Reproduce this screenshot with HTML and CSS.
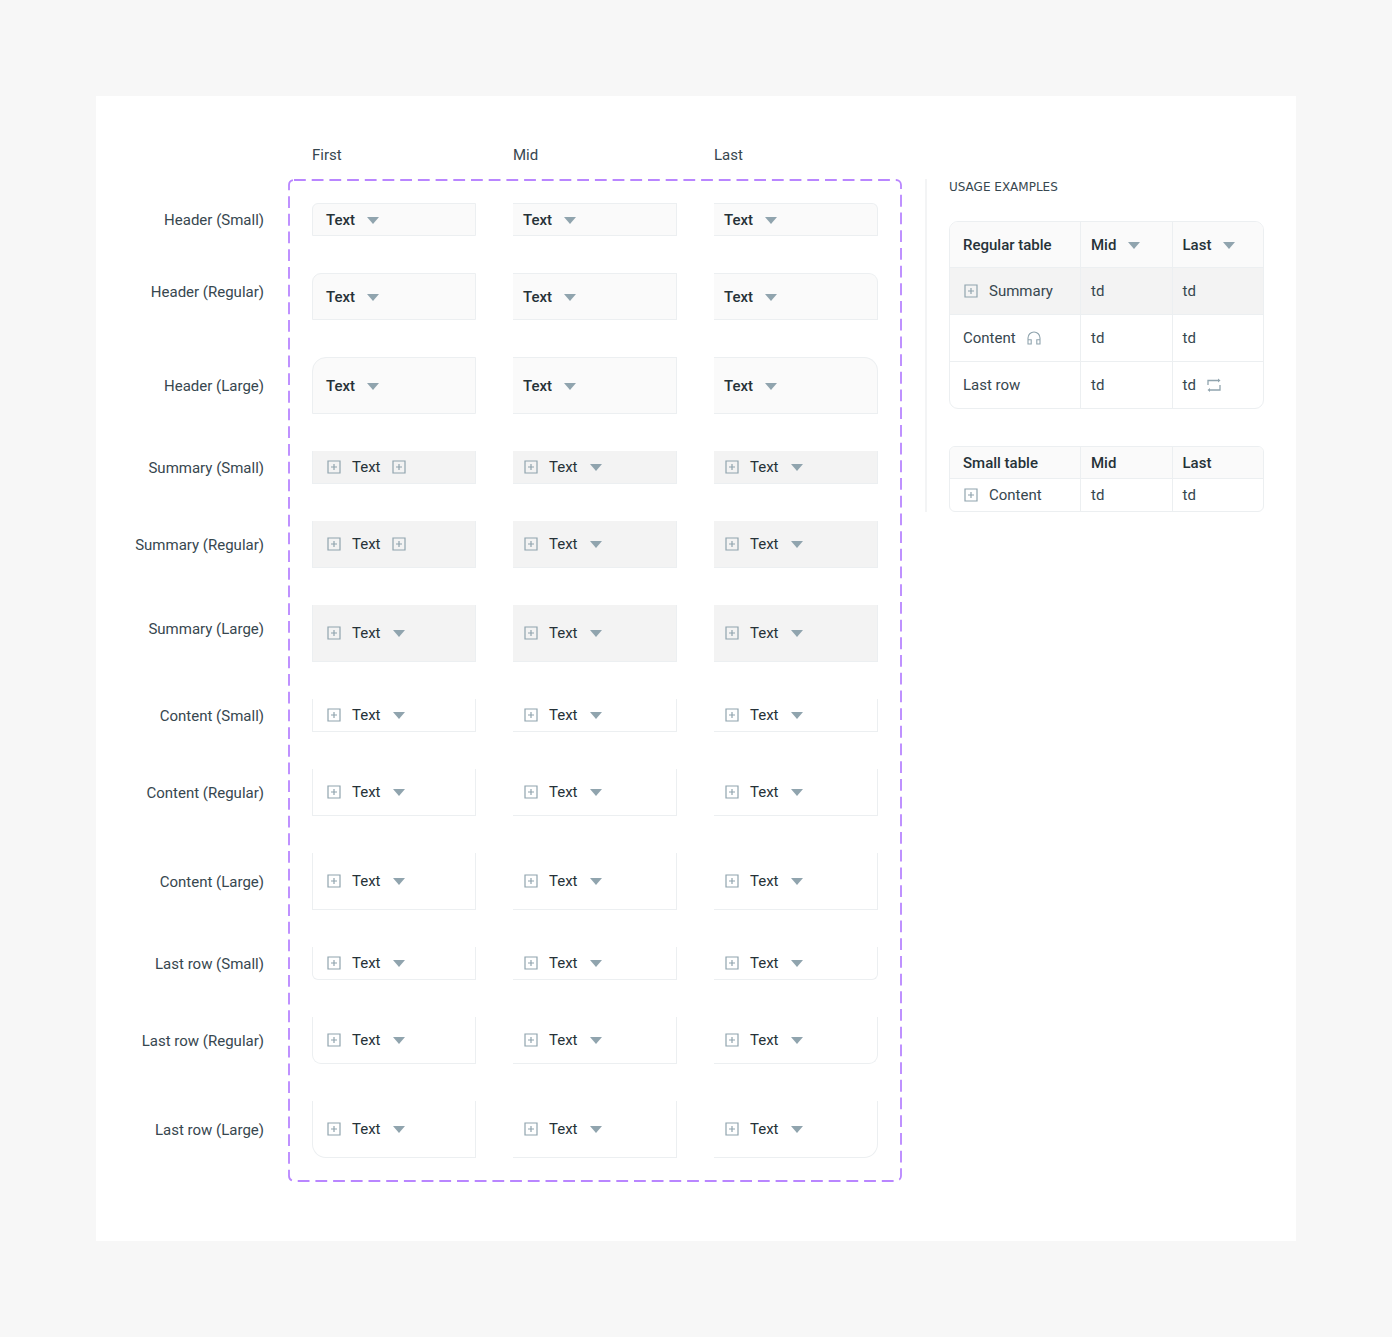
FILE: index.html
```html
<!DOCTYPE html>
<html lang="en">
  <head>
    <meta charset="UTF-8" />
    <title>Table cells</title>
    <link rel="stylesheet" href="styles.css">
  </head>

  <body>
    <svg width="0" height="0" class="sprite" aria-hidden="true">
      <symbol id="icon-sort" viewBox="0 0 16 16">
        <path d="M2 5h12l-6 7z" fill="currentColor" />
      </symbol>
      <symbol id="icon-plus" viewBox="0 0 16 16">
        <path d="M2 2h12v12H2zM8 5v6M5 8h6" fill="none" stroke="currentColor" stroke-width="1.2" />
      </symbol>
      <symbol id="icon-audio" viewBox="0 0 16 16">
        <path d="M2 13.5V8a6 6 0 0 1 12 0v5.5M2 9.8h3.2v4.2H2zM10.8 9.8H14v4.2h-3.2z" fill="none" stroke="currentColor" stroke-width="1.1" />
      </symbol>
      <symbol id="icon-repeat" viewBox="0 0 16 16">
        <path d="M2 8V3.5h11M14 8v5H3" fill="none" stroke="currentColor" stroke-width="1.3" />
        <path d="M12 1.5l2.5 2L12 5.5zM4 11l-2.5 2L4 15z" fill="currentColor" />
      </symbol>
    </svg>

    <main class="sheet">
      <div class="col-titles">
        <span>First</span>
        <span>Mid</span>
        <span>Last</span>
      </div>

      <div class="row-labels" id="row-labels"></div>

      <div class="frame">
        <svg class="frame-outline" aria-hidden="true">
          <rect x="1" y="1" rx="5" />
        </svg>
        <div class="variants" id="variants"></div>
      </div>

      <aside class="usage">
        <h2 class="usage-title">USAGE EXAMPLES</h2>

        <table class="table">
          <thead>
            <tr>
              <th class="col-first">Regular table</th>
              <th><div class="cell-content">Mid <button class="icon-btn" aria-label="Sort by Mid"><svg class="icon"><use href="#icon-sort" /></svg></button></div></th>
              <th><div class="cell-content">Last <button class="icon-btn" aria-label="Sort by Last"><svg class="icon"><use href="#icon-sort" /></svg></button></div></th>
            </tr>
          </thead>
          <tbody>
            <tr class="summary">
              <td><div class="cell-content"><button class="icon-btn" aria-label="Expand"><svg class="icon"><use href="#icon-plus" /></svg></button> Summary</div></td>
              <td>td</td>
              <td>td</td>
            </tr>
            <tr>
              <td><div class="cell-content">Content <svg class="icon"><use href="#icon-audio" /></svg></div></td>
              <td>td</td>
              <td>td</td>
            </tr>
            <tr>
              <td>Last row</td>
              <td>td</td>
              <td><div class="cell-content">td <svg class="icon"><use href="#icon-repeat" /></svg></div></td>
            </tr>
          </tbody>
        </table>

        <table class="table table-small">
          <thead>
            <tr>
              <th class="col-first">Small table</th>
              <th>Mid</th>
              <th>Last</th>
            </tr>
          </thead>
          <tbody>
            <tr>
              <td><div class="cell-content"><button class="icon-btn" aria-label="Expand"><svg class="icon"><use href="#icon-plus" /></svg></button> Content</div></td>
              <td>td</td>
              <td>td</td>
            </tr>
          </tbody>
        </table>
      </aside>
    </main>

    <script>
      const types = [
        { name: 'Header', type: 'header' },
        { name: 'Summary', type: 'summary' },
        { name: 'Content', type: 'content' },
        { name: 'Last row', type: 'last-row' },
      ];
      const sizes = ['Small', 'Regular', 'Large'];
      const positions = ['first', 'mid', 'last'];

      // Labels that sit a bit above the middle of their row
      const raised = ['Header (Regular)', 'Summary (Large)'];
      // First cells that end with a plus instead of the sort arrow
      const endsWithPlus = ['Summary (Small)', 'Summary (Regular)'];

      function iconButton(icon) {
        const label = icon === 'sort' ? 'Sort' : 'Expand';
        return `<button class="icon-btn" aria-label="${label}"><svg class="icon"><use href="#icon-${icon}" /></svg></button>`;
      }

      const labels = document.getElementById('row-labels');
      const variants = document.getElementById('variants');

      types.forEach(({ name, type }) => {
        sizes.forEach((size) => {
          const label = `${name} (${size})`;
          const sizeClass = `size-${size.toLowerCase()}`;
          const raisedClass = raised.includes(label) ? ' raised' : '';
          labels.innerHTML += `<div class="row-label ${sizeClass}${raisedClass}">${label}</div>`;

          const cells = positions.map((position) => {
            const before = type === 'header' ? '' : iconButton('plus');
            const plusEnd = position === 'first' && endsWithPlus.includes(label);
            const after = iconButton(plusEnd ? 'plus' : 'sort');
            return `<div class="cell ${type} ${position} ${sizeClass}">${before}<span>Text</span>${after}</div>`;
          });
          variants.innerHTML += cells.join('');
        });
      });
    </script>
  </body>
</html>
```
FILE: styles.css
```css
* {
  box-sizing: border-box;
}

body {
  margin: 0;
  padding: 96px;
  background: #f7f7f7;
  color: #37474f;
  font-family: Roboto, sans-serif;
  font-size: 15px;
  line-height: 24px;
}

.sprite {
  position: absolute;
}

.sheet {
  display: grid;
  grid-template-columns: 168px 1fr 362px;
  row-gap: 12px;
  padding: 47px 32px 59px 24px;
  background: #fff;
}

.col-titles {
  grid-column: 2;
  display: grid;
  grid-template-columns: repeat(3, 1fr);
  column-gap: 37px;
  padding: 0 24px;
}

.row-labels {
  grid-column: 1;
  display: flex;
  flex-direction: column;
  gap: 37px;
  padding: 24px 24px 0 0;
}

.row-label {
  display: flex;
  align-items: center;
  justify-content: flex-end;
  white-space: nowrap;
}

.row-label.raised {
  padding-bottom: 10px;
}

.size-small {
  --radius: 6px;
  height: 33px;
}

.size-regular {
  --radius: 9px;
  height: 47px;
}

.size-large {
  --radius: 14px;
  height: 57px;
}

.frame {
  position: relative;
  padding: 24px;
}

.frame-outline {
  position: absolute;
  top: 0;
  left: 0;
  width: 100%;
  height: 100%;
}

.frame-outline rect {
  width: calc(100% - 2px);
  height: calc(100% - 2px);
  fill: none;
  stroke: #b986ff;
  stroke-width: 1.8px;
  stroke-dasharray: 11.8 5.9;
}

.variants {
  position: relative;
  display: grid;
  grid-template-columns: repeat(3, 1fr);
  gap: 37px;
}

.cell,
.cell-content {
  display: flex;
  align-items: center;
  gap: 10px;
}

.cell {
  padding: 0 10px;
  border: 1px solid #eceff1;
  border-left: 0;
  border-top: 0;
  color: #263238;
}

.cell.first {
  padding-left: 13px;
  border-left: 1px solid #eceff1;
}

.cell.header {
  border-top: 1px solid #eceff1;
  background: #fafafa;
  font-weight: 500;
}

.cell.summary {
  background: #f3f3f3;
}

.header.first {
  border-top-left-radius: var(--radius);
}

.header.last {
  border-top-right-radius: var(--radius);
}

.last-row.first {
  border-bottom-left-radius: var(--radius);
}

.last-row.last {
  border-bottom-right-radius: var(--radius);
}

.icon-btn {
  display: flex;
  padding: 0;
  border: 0;
  background: none;
  color: inherit;
  cursor: pointer;
}

.icon {
  width: 16px;
  height: 16px;
  color: #90a4ae;
}

/* Usage examples */
.usage {
  align-self: start;
  margin-left: 23px;
  padding-left: 22px;
  border-left: 2px solid #f3f4f5;
}

.usage-title {
  margin: 0 0 26px;
  font-family: "DejaVu Sans", sans-serif;
  font-size: 12px;
  font-weight: 400;
  line-height: 16px;
}

.table {
  width: 100%;
  table-layout: fixed;
  border: 1px solid #eceff1;
  border-radius: 9px;
  border-spacing: 0;
  overflow: hidden;
}

.table th,
.table td {
  height: 47px;
  padding: 0 10px;
  border-left: 1px solid #eceff1;
  border-top: 1px solid #eceff1;
  text-align: left;
}

.table th {
  height: 45px;
  border-top: 0;
  background: #fafafa;
  color: #263238;
  font-weight: 500;
}

.table th:first-child,
.table td:first-child {
  padding-left: 13px;
  border-left: 0;
}

.table .col-first {
  width: 130px;
}

.table .summary td {
  background: #f3f3f3;
}

.table-small {
  margin-top: 37px;
  border-radius: 6px;
}

.table-small th {
  height: 31px;
}

.table-small td {
  height: 33px;
}
```
